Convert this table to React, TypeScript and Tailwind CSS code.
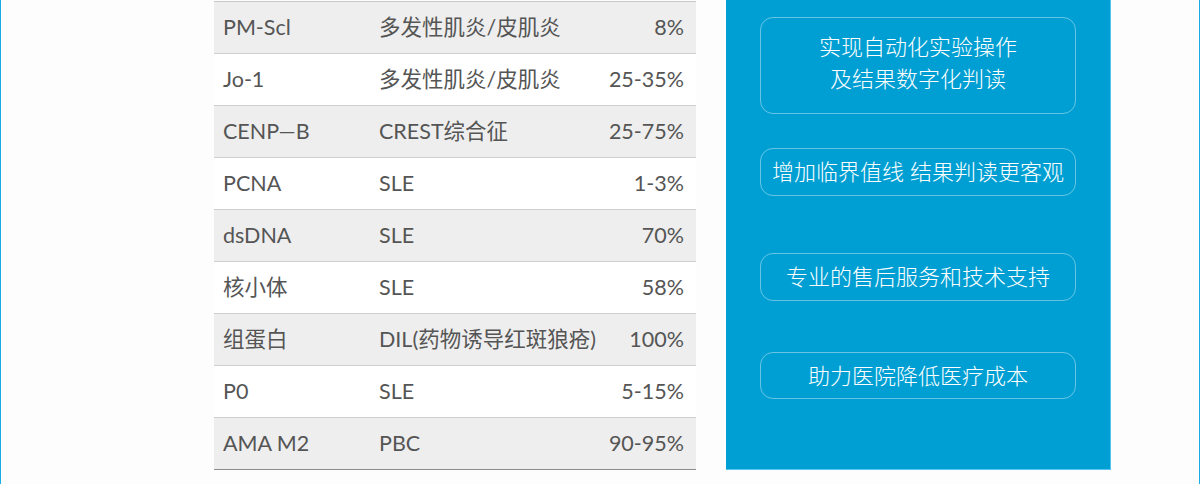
const rows = [
  { name: "PM-Scl", disease: "多发性肌炎/皮肌炎", rate: "8%" },
  { name: "Jo-1", disease: "多发性肌炎/皮肌炎", rate: "25-35%" },
  { name: "CENP—B", disease: "CREST综合征", rate: "25-75%" },
  { name: "PCNA", disease: "SLE", rate: "1-3%" },
  { name: "dsDNA", disease: "SLE", rate: "70%" },
  { name: "核小体", disease: "SLE", rate: "58%" },
  { name: "组蛋白", disease: "DIL(药物诱导红斑狼疮)", rate: "100%" },
  { name: "P0", disease: "SLE", rate: "5-15%" },
  { name: "AMA M2", disease: "PBC", rate: "90-95%" },
];

const features = [
  { lines: ["实现自动化实验操作", "及结果数字化判读"], cls: "mt-[17px] h-[97px] pb-[6px]" },
  { lines: ["增加临界值线 结果判读更客观"], cls: "mt-[34px] h-[48px]" },
  { lines: ["专业的售后服务和技术支持"], cls: "mt-[57px] h-[48px]" },
  { lines: ["助力医院降低医疗成本"], cls: "mt-[51px] h-[47px]" },
];

function AntibodyTable() {
  return (
    <div className="w-[482px] mt-[1px] border-t border-[#c8c8c8] text-[#555] text-[21.5px]">
      {rows.map((r, i) => (
        <div
          key={r.name}
          className={`flex items-center h-[52px] border-b ${
            i % 2 === 0 ? "bg-[#eeeeee]" : "bg-white"
          } ${i === rows.length - 1 ? "border-[#8c8c8c]" : "border-[#cfcfcf]"}`}
        >
          <div className="w-[165px] pl-[9px]">{r.name}</div>
          <div className="flex-1 whitespace-nowrap">{r.disease}</div>
          <div className="pr-[12px] text-right">{r.rate}</div>
        </div>
      ))}
    </div>
  );
}

function FeaturePanel() {
  return (
    <div className="ml-[30px] w-[385px] h-[470px] bg-[#009fd3] border-r border-b border-[#55c4ee] flex flex-col items-center">
      {features.map((f) => (
        <div
          key={f.lines[0]}
          className={`w-[316px] ${f.cls} rounded-[13px] border border-white/40 flex flex-col items-center justify-center text-white text-[22px] leading-[32px] font-light`}
        >
          {f.lines.map((l) => (
            <span key={l} className="whitespace-pre">
              {l}
            </span>
          ))}
        </div>
      ))}
    </div>
  );
}

export default function App() {
  return (
    <div
      className="w-[1200px] h-[484px] bg-[#fdfdfd] border-l border-r border-[#19ade6] flex pl-[213px] overflow-hidden"
      style={{ fontFamily: 'Lato, "Noto Sans CJK SC", sans-serif' }}
    >
      <AntibodyTable />
      <FeaturePanel />
    </div>
  );
}
